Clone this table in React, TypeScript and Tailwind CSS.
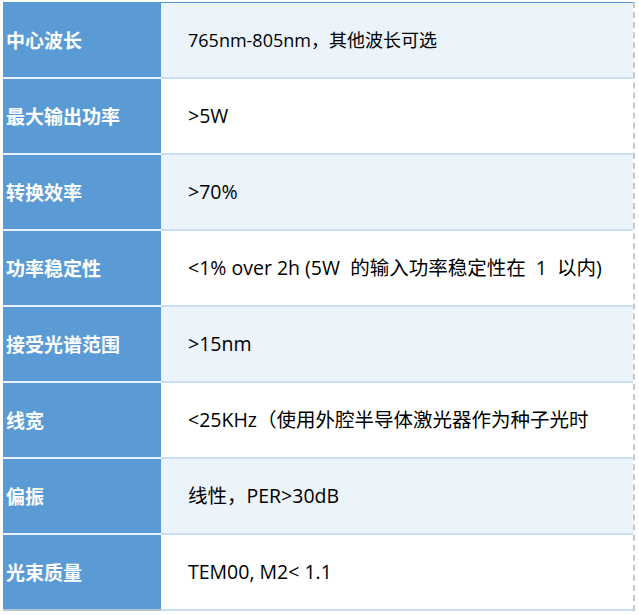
import React from 'react';

const ROWS: { label: string; value: string; small?: boolean }[] = [
  { label: '中心波长', value: '765nm-805nm，其他波长可选', small: true },
  { label: '最大输出功率', value: '>5W' },
  { label: '转换效率', value: '>70%' },
  { label: '功率稳定性', value: '<1% over 2h (5W  的输入功率稳定性在  1  以内)' },
  { label: '接受光谱范围', value: '>15nm' },
  { label: '线宽', value: '<25KHz（使用外腔半导体激光器作为种子光时' },
  { label: '偏振', value: '线性，PER>30dB' },
  { label: '光束质量', value: 'TEM00, M2< 1.1' },
];

export default function App() {
  return (
    <div
      className="w-[639px] h-[615px] bg-white pt-[2px] pl-[3px]"
      style={{ fontFamily: '"Open Sans", "Noto Sans CJK SC", sans-serif' }}
    >
      <div className="w-[632px] border-r-2 border-dashed border-[#c8c8c8]">
        <div className="border-t border-[#5b9bd5]">
          {ROWS.map((row, idx) => (
            <div key={idx} className="flex h-[76px]">
              <div
                className={`w-[158px] shrink-0 bg-[#5b9bd5] flex items-center pl-[3px] text-white font-bold text-[19px] border-b-2 ${
                  idx === ROWS.length - 1 ? 'border-[#b8c4d0]' : 'border-[#e6eef7]'
                }`}
                style={{ fontFamily: '"Noto Sans CJK SC", sans-serif' }}
              >
                {row.label}
              </div>
              <div
                className={`flex-1 flex items-center pl-[27px] text-black whitespace-pre border-b-2 border-[#c9def2] ${
                  row.small ? 'text-[18px]' : 'text-[19.5px]'
                } ${idx % 2 === 0 ? 'bg-[#ebf3fb]' : 'bg-white'}`}
              >
                {row.value}
              </div>
            </div>
          ))}
        </div>
      </div>
    </div>
  );
}
